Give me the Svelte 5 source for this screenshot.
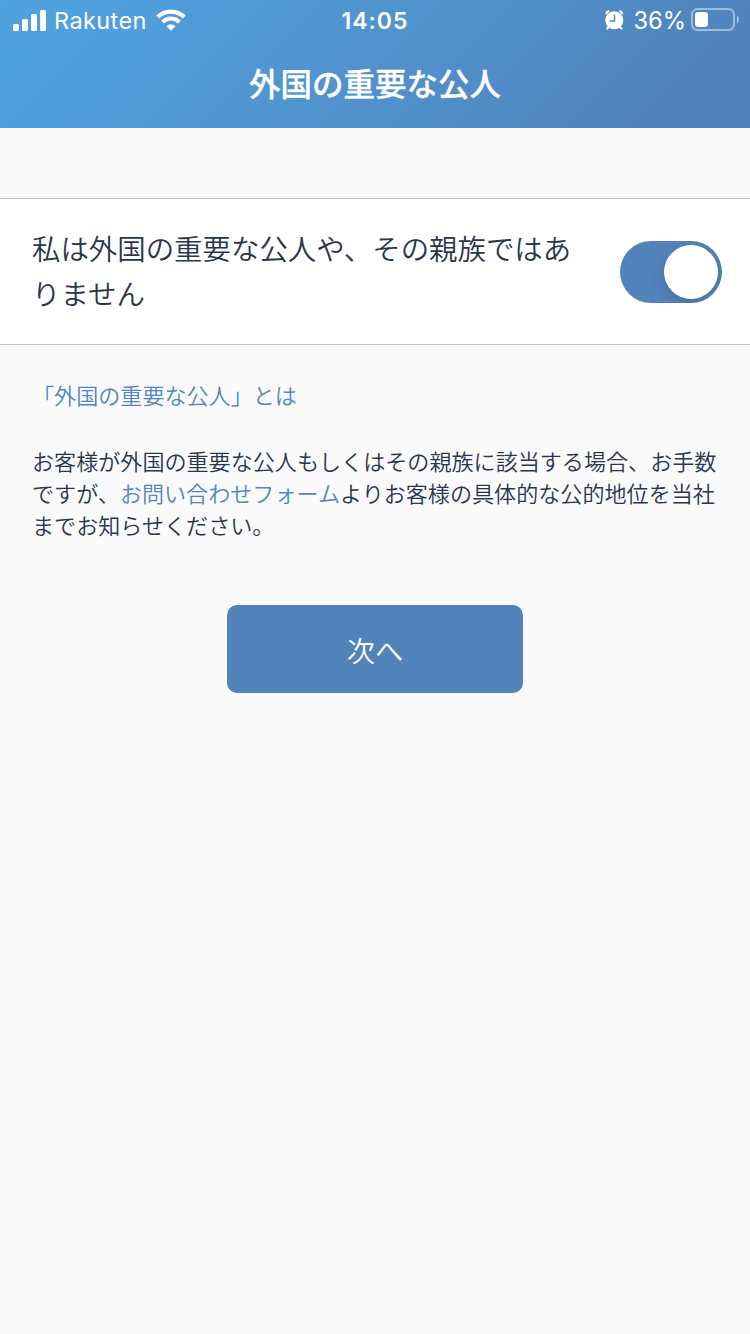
<script lang="ts">
  let declared = $state(true);

  const signalBars = [7, 12, 17, 21];

  const toggle = () => {
    declared = !declared;
  };
</script>

<main class="screen">
  <header class="header">
    <div class="status-bar">
      <div class="status-left">
        <div class="signal">
          {#each signalBars as height}
            <i style:height="{height}px"></i>
          {/each}
        </div>
        <span class="carrier">Rakuten</span>
        <svg class="wifi" width="30" height="22" viewBox="0 0 30 22" fill="none" stroke="#fff">
          <path d="M1.7 8.1A18.7 18.7 0 0 1 28.3 8.1" stroke-width="4.2" />
          <path d="M6.6 13.1A11.8 11.8 0 0 1 23.4 13.1" stroke-width="4" />
          <path d="M10.4 17.2Q15 13.2 19.6 17.2L15 21.8Z" fill="#fff" stroke="none" />
        </svg>
      </div>
      <span class="time">14:05</span>
      <div class="status-right">
        <svg class="alarm" width="20" height="20" viewBox="0 0 20 20">
          <circle cx="9.3" cy="10.3" r="9" fill="#fff" />
          <g fill="none" stroke="#fff" stroke-width="2.2" stroke-linecap="round">
            <path d="M1.5 3.4Q1.8 1.6 3.6 1.3M15 1.3Q16.8 1.6 17.1 3.4" />
            <path d="M3.8 16.7L2.2 18.5M14.8 16.7L16.4 18.5" />
          </g>
          <path d="M9.5 4.8V11H4.6" fill="none" stroke="#508bc5" stroke-width="1.5" />
        </svg>
        <span class="percent">36%</span>
        <svg class="battery" width="48" height="24" viewBox="0 0 48 24">
          <rect x="1" y="1" width="42" height="21" rx="5.5" fill="none" stroke="#fff" stroke-opacity="0.45" stroke-width="2" />
          <rect x="4" y="4" width="13" height="15" rx="3" fill="#fff" />
          <path d="M46 7.5Q48 9 48 11.5T46 15.5Z" fill="#fff" fill-opacity="0.5" />
        </svg>
      </div>
    </div>
    <h1>外国の重要な公人</h1>
  </header>

  <section class="declaration">
    <span class="label">私は外国の重要な公人や、その親族ではありません</span>
    <button class="switch" class:on={declared} role="switch" aria-checked={declared} aria-label="私は外国の重要な公人や、その親族ではありません" onclick={toggle}>
      <span class="knob"></span>
    </button>
  </section>

  <section class="notes">
    <a class="about" href="#about">「外国の重要な公人」とは</a>
    <p>お客様が外国の重要な公人もしくはその親族に該当する場合、お手数ですが、<a href="#contact">お問い合わせフォーム</a>よりお客様の具体的な公的地位を当社までお知らせください。</p>
  </section>

  <button class="next">次へ</button>
</main>

<style>
:global(body) {
  margin: 0;
  background: #fafafa;
}

.screen {
  min-height: 1334px;
  font-family: "Noto Sans CJK JP", sans-serif;
  font-weight: 350;
  color: #2a364d;
  background: #fafafa;
}

.header {
  height: 128px;
  color: #fff;
  background: linear-gradient(135deg, #50a1df 0%, #50a0dd 12%, #5092cd 50%, #5181ba 95%);
}

.status-bar {
  display: grid;
  grid-template-columns: 1fr auto 1fr;
  align-items: center;
  height: 40px;
  font-family: Inter, sans-serif;
  font-weight: 400;
  font-size: 24px;
  line-height: 38px;
}
.status-left {
  display: flex;
  align-items: center;
  padding-left: 13px;
}
.signal {
  display: flex;
  align-items: flex-end;
  gap: 3px;
  height: 21px;
  margin-top: 1px;
}
.signal i {
  width: 6px;
  border-radius: 1.5px;
  background: #fff;
}
.carrier {
  margin-left: 8px;
  padding-top: 2px;
  font-size: 23.5px;
  letter-spacing: 0.4px;
}
.wifi {
  margin-left: 9px;
}
.time {
  padding-top: 1px;
  font-size: 23px;
  font-weight: 600;
  letter-spacing: 1px;
}
.status-right {
  display: flex;
  align-items: center;
  justify-content: flex-end;
  padding-right: 11px;
}
.alarm {
  margin-right: 8px;
}
.percent {
  margin-right: 5px;
  padding-top: 2px;
  font-size: 23.7px;
}

h1 {
  margin: 0;
  padding-top: 18px;
  font-size: 31.5px;
  font-weight: 500;
  line-height: 48px;
  text-align: center;
  -webkit-text-stroke: 0.3px #fff;
}

.declaration {
  display: flex;
  align-items: center;
  justify-content: space-between;
  box-sizing: border-box;
  height: 147px;
  margin-top: 70px;
  padding: 0 28px 0 32px;
  border-top: 1px solid #c4c4c6;
  border-bottom: 1px solid #c4c4c6;
  background: #fff;
}
.label {
  width: 548px;
  padding-bottom: 3px;
  font-size: 28.43px;
  line-height: 45px;
}

.switch {
  width: 102px;
  height: 62px;
  padding: 4px;
  border: 0;
  border-radius: 31px;
  background: #c9ced6;
  overflow: hidden;
  cursor: pointer;
}
.switch.on {
  background: #5383bb;
}
.knob {
  display: block;
  width: 54px;
  height: 54px;
  border-radius: 50%;
  background: #fff;
  box-shadow: 0 5px 14px rgba(0, 0, 0, 0.15);
}
.switch.on .knob {
  margin-left: 40px;
}

.notes {
  padding: 33px 30px 0 32px;
  font-size: 22.08px;
  line-height: 32px;
}
.notes a {
  color: #5186c2;
  text-decoration: none;
}
.about {
  display: block;
}
.notes p {
  margin: 34px 0 0;
}

.next {
  display: block;
  width: 296px;
  height: 88px;
  margin: 65px auto 0;
  padding: 0;
  border: 0;
  border-radius: 10px;
  font-family: inherit;
  font-size: 28.2px;
  font-weight: 350;
  color: #fff;
  background: #5383bb;
  cursor: pointer;
}
</style>
